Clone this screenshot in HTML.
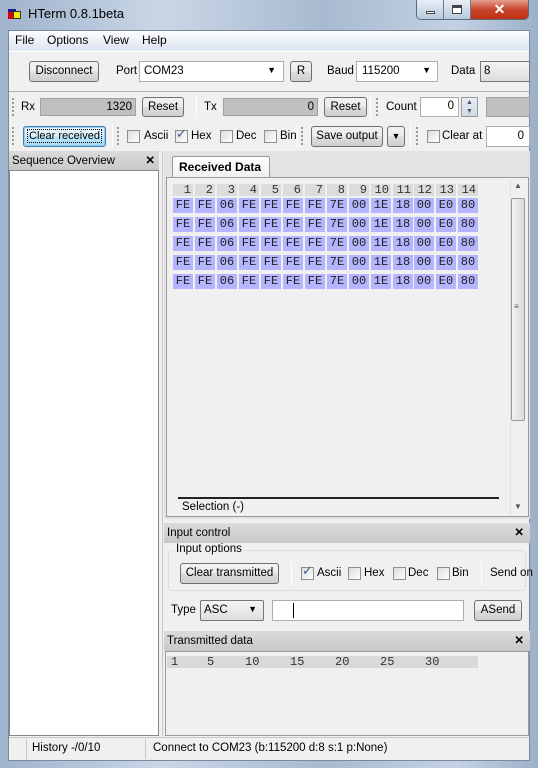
<!DOCTYPE html>
<html><head><meta charset="utf-8"><style>
*{box-sizing:border-box;margin:0;padding:0}
body{width:538px;height:768px;overflow:hidden;position:relative;font-family:"Liberation Sans",sans-serif;font-size:11.5px;color:#000;background:#8fa3bd}
.a{position:absolute}
.frame{left:0;top:0;width:538px;height:768px;background:linear-gradient(90deg,#9fb3cc,#c9d6e6 30%,#a9bad0 60%,#c3d1e2 85%,#9cb0c9)}
.btn{position:absolute;border:1px solid #707070;border-radius:3px;background:linear-gradient(#f2f2f2,#ebebeb 50%,#dddddd 51%,#cfcfcf);text-align:center;font-size:11.5px;line-height:18px;white-space:nowrap;overflow:hidden}
.inp{position:absolute;background:#fff;border:1px solid #abadb3;white-space:nowrap}
.ro{position:absolute;background:#c0c0c0;border:1px solid #a0a0a0;text-align:right;padding-right:3px;line-height:17px}
.cb{position:absolute;width:13px;height:13px;border:1px solid #8e8f8f;background:linear-gradient(135deg,#dcdcdc,#fff)}
.grip{position:absolute;width:3px;height:18px;border-left:2px dotted #999}
.sep{position:absolute;width:1px;background:#a0a0a0;border-right:1px solid #fff}
.t{position:absolute;white-space:nowrap}
.cell{position:absolute;width:20px;height:15px;background:#b4b4ff;font-family:"Liberation Mono",monospace;font-size:12px;line-height:15px;text-align:center;color:#222}
.hd{position:absolute;width:20px;height:12px;background:#dcdcdc;font-family:"Liberation Mono",monospace;font-size:12px;line-height:13px;text-align:right;padding-right:2px;color:#333}
.ph{position:absolute;background:linear-gradient(#dcdcdc,#c8c8c8);height:20px;line-height:20px;padding-left:3px;white-space:nowrap}
</style></head><body>
<div class="a frame"></div>
<div class="a" style="left:8px;top:9px;width:8px;height:7px;background:#1a1a8a"></div>
<div class="a" style="left:8px;top:12px;width:6px;height:7px;background:#d00"></div>
<div class="a" style="left:13px;top:11px;width:8px;height:8px;background:#ee0;border:1px solid #333"></div>
<div class="t" style="left:28px;top:6px;font-size:13px">HTerm 0.8.1beta</div>
<div class="a" style="left:416px;top:0;width:113px;height:20px;border:1px solid #5a6a80;border-top:none;border-radius:0 0 5px 5px;overflow:hidden;display:flex">
 <div style="width:27px;background:linear-gradient(#e8eef6,#b8c8dc);border-right:1px solid #6a7a90;position:relative"><div class="a" style="left:9px;top:11px;width:9px;height:3px;background:#fff;border:1px solid #444"></div></div>
 <div style="width:27px;background:linear-gradient(#e8eef6,#b8c8dc);border-right:1px solid #6a7a90;position:relative"><div class="a" style="left:8px;top:5px;width:10px;height:9px;border:1px solid #444;border-top-width:3px;background:#fff"></div></div>
 <div style="flex:1;background:linear-gradient(#e8a090,#c8442c 50%,#c03010);color:#fff;text-align:center;font-weight:bold;font-size:14px;line-height:18px">✕</div>
</div>
<div class="a" style="left:8px;top:30px;width:522px;height:731px;background:#f0f0f0;border:1px solid #7a8a9e"></div>
<div class="a" style="left:9px;top:31px;width:520px;height:19px;background:linear-gradient(#fdfdfe,#dce5f2)"></div>
<div class="t" style="left:15px;top:33px;font-size:12px">File</div><div class="t" style="left:47px;top:33px;font-size:12px">Options</div><div class="t" style="left:103px;top:33px;font-size:12px">View</div><div class="t" style="left:142px;top:33px;font-size:12px">Help</div>
<div class="a" style="left:9px;top:51px;width:520px;height:41px;border-top:1px solid #fff;border-bottom:1px solid #b0b0b0"></div>
<div class="btn" style="left:29px;top:61px;width:70px;height:21px">Disconnect</div>
<div class="t" style="left:116px;top:65px">Port</div>
<div class="inp" style="left:139px;top:61px;width:145px;height:21px;padding:3px 4px">COM23<span style="position:absolute;right:7px;top:3px;font-size:9px">▼</span></div>
<div class="btn" style="left:290px;top:61px;width:22px;height:21px">R</div>
<div class="t" style="left:327px;top:65px">Baud</div>
<div class="inp" style="left:356px;top:61px;width:82px;height:21px;padding:3px 5px">115200<span style="position:absolute;right:6px;top:3px;font-size:9px">▼</span></div>
<div class="t" style="left:451px;top:65px">Data</div>
<div class="inp" style="left:480px;top:61px;width:50px;height:21px;padding:3px 3px;background:linear-gradient(#f5f5f5,#dcdcdc);border-color:#777">8</div>
<div class="grip" style="left:12px;top:98px"></div>
<div class="t" style="left:21px;top:101px">Rx</div>
<div class="ro" style="left:40px;top:98px;width:96px;height:18px">1320</div>
<div class="btn" style="left:142px;top:97px;width:42px;height:20px">Reset</div>
<div class="sep" style="left:196px;top:96px;height:22px"></div>
<div class="t" style="left:204px;top:101px">Tx</div>
<div class="ro" style="left:223px;top:98px;width:95px;height:18px">0</div>
<div class="btn" style="left:324px;top:97px;width:43px;height:20px">Reset</div>
<div class="sep" style="left:370px;top:96px;height:22px"></div>
<div class="grip" style="left:376px;top:98px"></div>
<div class="t" style="left:386px;top:101px">Count</div>
<div class="inp" style="left:420px;top:97px;width:39px;height:20px;text-align:right;padding:2px 4px">0</div>
<div class="a" style="left:461px;top:97px;width:17px;height:20px;border:1px solid #999;background:linear-gradient(#e6eef8,#cfd9e6);font-size:7px;line-height:9px;text-align:center;color:#556">▲<br>▼</div>
<div class="ro" style="left:486px;top:97px;width:44px;height:20px"></div>
<div class="grip" style="left:12px;top:127px"></div>
<div class="btn" style="left:23px;top:126px;width:83px;height:21px;border:1px solid #3c7fb1;box-shadow:inset 0 0 0 1px #9ce;background:linear-gradient(#eaf6fd,#d9f0fc 50%,#bee6fd 51%,#a7d9f5);font-size:11px"><span style="border:1px dotted #000;padding:0 1px">Clear received</span></div>
<div class="sep" style="left:112px;top:124px;height:24px"></div>
<div class="grip" style="left:117px;top:127px"></div>
<div class="cb" style="left:127px;top:130px"></div><div class="t" style="left:144px;top:130px">Ascii</div>
<div class="cb" style="left:175px;top:130px"></div><div class="t" style="left:176px;top:126px;color:#3a5a9a;font-size:13px">✓</div><div class="t" style="left:191px;top:130px">Hex</div>
<div class="cb" style="left:220px;top:130px"></div><div class="t" style="left:236px;top:130px">Dec</div>
<div class="cb" style="left:264px;top:130px"></div><div class="t" style="left:280px;top:130px">Bin</div>
<div class="sep" style="left:297px;top:124px;height:24px"></div>
<div class="grip" style="left:301px;top:127px"></div>
<div class="btn" style="left:311px;top:126px;width:72px;height:21px">Save output</div>
<div class="btn" style="left:387px;top:126px;width:18px;height:21px;font-size:9px">▼</div>
<div class="sep" style="left:410px;top:124px;height:24px"></div>
<div class="grip" style="left:416px;top:127px"></div>
<div class="cb" style="left:427px;top:130px"></div><div class="t" style="left:442px;top:130px">Clear at</div>
<div class="inp" style="left:486px;top:126px;width:44px;height:21px;text-align:right;padding:3px 5px">0</div>
<div class="ph" style="left:9px;top:151px;width:150px">Sequence Overview<span style="position:absolute;right:4px;top:0;font-weight:bold">✕</span></div>
<div class="a" style="left:9px;top:170px;width:150px;height:566px;background:#fff;border:1px solid #828790"></div>
<div class="a" style="left:162px;top:151px;width:1px;height:585px;background:#c8c8c8"></div>
<div class="a" style="left:164px;top:151px;width:366px;height:368px;background:#e3e3e3"></div>
<div class="a" style="left:172px;top:156px;width:98px;height:22px;background:linear-gradient(#fff,#f0f0f0);border:1px solid #999;border-bottom:none;border-radius:2px 2px 0 0;font-weight:bold;font-size:12px;padding:3px 6px;white-space:nowrap">Received Data</div>
<div class="a" style="left:166px;top:177px;width:363px;height:340px;background:#f0f0f0;border:1px solid #9a9a9a"></div>
<div id="grid"></div>
<div class="a" style="left:510px;top:180px;width:16px;height:335px;background:#f0f0f0;border-left:1px solid #e0e0e0"></div>
<div class="t" style="left:514px;top:181px;font-size:8px;color:#555">▲</div>
<div class="a" style="left:511px;top:198px;width:14px;height:223px;border:1px solid #999;border-radius:2px;background:linear-gradient(90deg,#f2f2f2,#dadada)"></div>
<div class="t" style="left:514px;top:302px;font-size:8px;color:#555">≡</div>
<div class="t" style="left:514px;top:502px;font-size:8px;color:#555">▼</div>
<div class="a" style="left:178px;top:497px;width:321px;height:2px;background:#222"></div>
<div class="t" style="left:182px;top:501px">Selection (-)</div>
<div class="ph" style="left:164px;top:523px;width:366px">Input control<span style="position:absolute;right:6px;top:0;font-weight:bold">✕</span></div>
<div class="a" style="left:168px;top:550px;width:358px;height:41px;border:1px solid #d5dfe5;border-radius:3px"></div>
<div class="t" style="left:174px;top:543px;background:#f0f0f0;padding:0 2px">Input options</div>
<div class="btn" style="left:180px;top:563px;width:99px;height:21px">Clear transmitted</div>
<div class="sep" style="left:291px;top:561px;height:25px"></div>
<div class="cb" style="left:301px;top:567px"></div><div class="t" style="left:302px;top:563px;color:#3a5a9a;font-size:13px">✓</div><div class="t" style="left:317px;top:567px">Ascii</div>
<div class="cb" style="left:348px;top:567px"></div><div class="t" style="left:364px;top:567px">Hex</div>
<div class="cb" style="left:393px;top:567px"></div><div class="t" style="left:408px;top:567px">Dec</div>
<div class="cb" style="left:437px;top:567px"></div><div class="t" style="left:452px;top:567px">Bin</div>
<div class="sep" style="left:481px;top:561px;height:25px"></div>
<div class="t" style="left:490px;top:567px">Send on</div>
<div class="t" style="left:171px;top:604px">Type</div>
<div class="a" style="left:200px;top:600px;width:64px;height:21px;border:1px solid #777;border-radius:2px;background:linear-gradient(#f5f5f5,#dedede);padding:3px 3px">ASC<span style="position:absolute;right:6px;top:3px;font-size:9px">▼</span></div>
<div class="inp" style="left:272px;top:600px;width:192px;height:21px"></div>
<div class="a" style="left:293px;top:603px;width:1px;height:15px;background:#000"></div>
<div class="btn" style="left:474px;top:600px;width:48px;height:21px">ASend</div>
<div class="ph" style="left:164px;top:631px;width:366px">Transmitted data<span style="position:absolute;right:6px;top:0;font-weight:bold">✕</span></div>
<div class="a" style="left:165px;top:651px;width:364px;height:85px;background:#f0f0f0;border:1px solid #9a9a9a"></div>
<div class="a" style="left:167px;top:656px;width:311px;height:12px;background:#d9d9d9;font-family:'Liberation Mono',monospace;font-size:12px;line-height:12px;color:#333"><span class="a" style="left:4px">1</span><span class="a" style="left:40px">5</span><span class="a" style="left:78px">10</span><span class="a" style="left:123px">15</span><span class="a" style="left:168px">20</span><span class="a" style="left:213px">25</span><span class="a" style="left:258px">30</span></div>
<div class="a" style="left:9px;top:737px;width:520px;height:23px;background:#f0f0f0;border-top:1px solid #c8c8c8"></div>
<div class="a" style="left:26px;top:739px;width:1px;height:20px;background:#c8c8c8"></div>
<div class="a" style="left:145px;top:739px;width:1px;height:20px;background:#c8c8c8"></div>
<div class="t" style="left:32px;top:742px">History -/0/10</div>
<div class="t" style="left:153px;top:742px">Connect to COM23 (b:115200 d:8 s:1 p:None)</div>
<script>
var v=["FE","FE","06","FE","FE","FE","FE","7E","00","1E","18","00","E0","80"],h="";
for(var i=0;i<14;i++){var x=Math.round(173+i*21.95);
h+='<div class="hd" style="left:'+x+'px;top:184px">'+(i+1)+'</div>';
for(var r=0;r<5;r++)h+='<div class="cell" style="left:'+x+'px;top:'+(198+r*19)+'px">'+v[i]+'</div>';}
document.getElementById("grid").innerHTML=h;
</script>
</body></html>
